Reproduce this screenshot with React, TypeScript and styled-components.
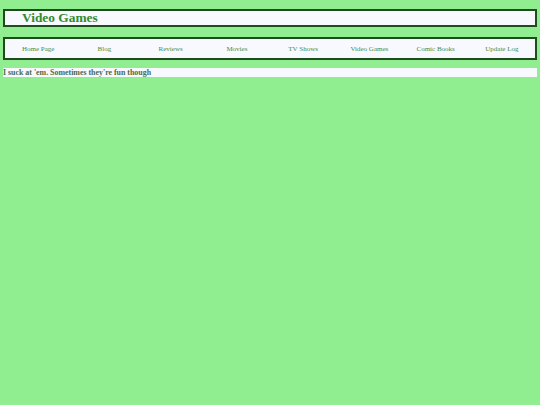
import styled, { createGlobalStyle } from 'styled-components';

const GlobalStyle = createGlobalStyle`
  html, body {
    margin: 0;
    padding: 0;
    background: #90ee90;
  }
  body {
    font-family: "Liberation Serif", "Times New Roman", serif;
  }
`;

const Page = styled.div`
  padding: 9px 3px;
  display: flex;
  flex-direction: column;
`;

const Header = styled.header`
  background: #f8f8ff;
  border: 2px solid #1d4d1d;
  height: 14px;
  display: flex;
  align-items: center;
  padding-left: 17px;
  margin-bottom: 10px;
`;

const Title = styled.h1`
  margin: 0;
  font-size: 13.4px;
  font-weight: bold;
  color: #2e8b2e;
`;

const Nav = styled.nav`
  background: #f8f8ff;
  border: 2px solid #1d4d1d;
  height: 19px;
  display: grid;
  grid-template-columns: repeat(8, 1fr);
  align-items: center;
  margin-bottom: 8px;
`;

const NavLink = styled.a`
  text-align: center;
  font-size: 7px;
  color: #3f8f3f;
  text-decoration: none;
`;

const Blurb = styled.p`
  margin: 0;
  background: #f8f8ff;
  height: 9px;
  font-size: 7.9px;
  line-height: 9px;
  font-weight: bold;
  color: #4a6a4a;
`;

const links = ['Home Page', 'Blog', 'Reviews', 'Movies', 'TV Shows', 'Video Games', 'Comic Books', 'Update Log'];

export default function App() {
  return (
    <>
      <GlobalStyle />
      <Page>
        <Header>
          <Title>Video Games</Title>
        </Header>
        <Nav>
          {links.map((l) => (
            <NavLink key={l} href="#">
              {l}
            </NavLink>
          ))}
        </Nav>
        <Blurb>I suck at 'em. Sometimes they're fun though</Blurb>
      </Page>
    </>
  );
}
